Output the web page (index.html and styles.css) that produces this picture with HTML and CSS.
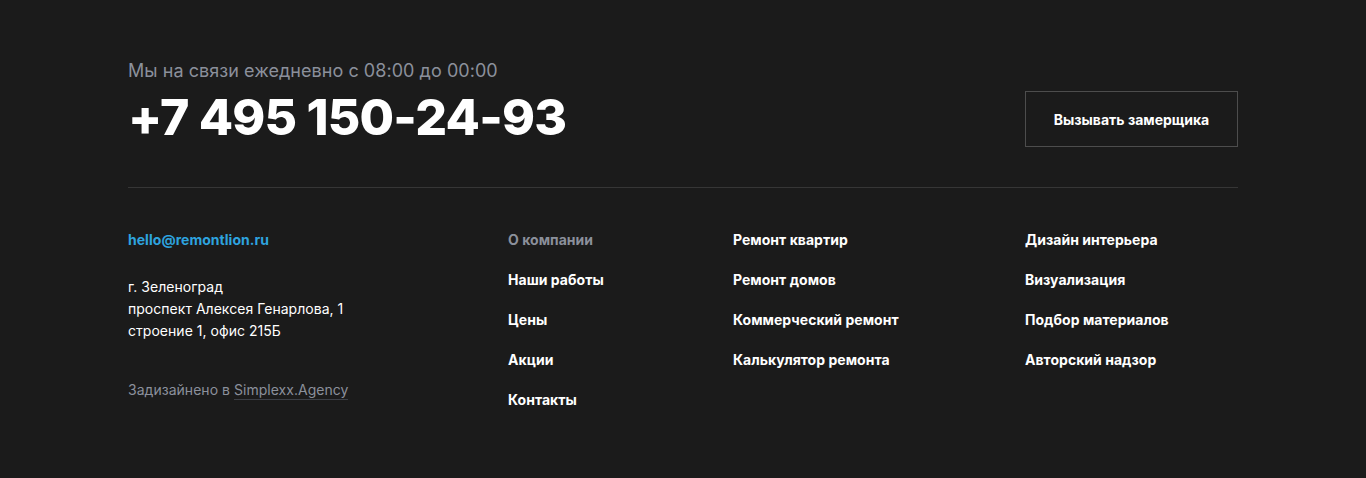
FILE: index.html
```html
<!DOCTYPE html>
<html lang="ru">
<head>
<meta charset="utf-8">
<link rel="stylesheet" href="styles.css">
</head>
<body>
<footer class="footer">
  <div class="top">
    <div class="contact">
      <p class="hours">Мы на связи ежедневно с 08:00 до 00:00</p>
      <a class="phone" href="#">+7 495 150-24-93</a>
    </div>
    <a class="btn" href="#">Вызывать замерщика</a>
  </div>
  <div class="bottom">
    <div class="col info">
      <a class="email" href="#">hello@remontlion.ru</a>
      <p class="address">г. Зеленоград<br>проспект Алексея Генарлова, 1<br>строение 1, офис 215Б</p>
      <p class="credit">Задизайнено в <a href="#">Simplexx.Agency</a></p>
    </div>
    <ul class="col menu">
      <li><a class="muted" href="#">О компании</a></li>
      <li><a href="#">Наши работы</a></li>
      <li><a href="#">Цены</a></li>
      <li><a href="#">Акции</a></li>
      <li><a href="#">Контакты</a></li>
    </ul>
    <ul class="col menu">
      <li><a href="#">Ремонт квартир</a></li>
      <li><a href="#">Ремонт домов</a></li>
      <li><a href="#">Коммерческий ремонт</a></li>
      <li><a href="#">Калькулятор ремонта</a></li>
    </ul>
    <ul class="col menu">
      <li><a href="#">Дизайн интерьера</a></li>
      <li><a href="#">Визуализация</a></li>
      <li><a href="#">Подбор материалов</a></li>
      <li><a href="#">Авторский надзор</a></li>
    </ul>
  </div>
</footer>
</body>
</html>
```
FILE: styles.css
```css
* { box-sizing: border-box; }
html, body { margin: 0; padding: 0; }
body {
  background: #1b1b1b;
  font-family: Inter, "Noto Sans", sans-serif;
  color: #fff;
  height: 478px;
  overflow: hidden;
}
a { color: inherit; text-decoration: none; }
p { margin: 0; }
ul { margin: 0; padding: 0; list-style: none; }

.footer {
  width: 1110px;
  margin: 0 auto;
  padding-top: 59px;
}
.top {
  display: flex;
  justify-content: space-between;
  align-items: flex-start;
  padding-bottom: 40px;
  border-bottom: 1px solid #363636;
}
.hours {
  font-size: 18px;
  line-height: 24px;
  color: #8b909b;
  letter-spacing: 0.05px;
}
.phone {
  display: block;
  margin-top: 4px;
  font-size: 50px;
  line-height: 60px;
  font-weight: 800;
  letter-spacing: -0.8px;
}
.btn {
  margin-top: 32px;
  width: 213px;
  height: 56px;
  border: 1px solid #4d4d4d;
  display: flex;
  align-items: center;
  justify-content: center;
  font-size: 14px;
  font-weight: 700;
}
.bottom {
  display: grid;
  grid-template-columns: 380px 225px 292px 1fr;
  padding-top: 42px;
}
.col { font-size: 14px; line-height: 20px; letter-spacing: 0.03px; }
.email { color: #2ea3df; font-weight: 700; }
.address {
  margin-top: 26px;
  line-height: 22px;
}
.credit {
  margin-top: 38px;
  color: #8b909b;
}
.credit a {
  border-bottom: 1px solid #3c3f46;
  padding-bottom: 1px;
}
.menu li { margin-bottom: 20px; }
.menu a { font-weight: 700; }
.menu a.muted { color: #8b909b; }
```
